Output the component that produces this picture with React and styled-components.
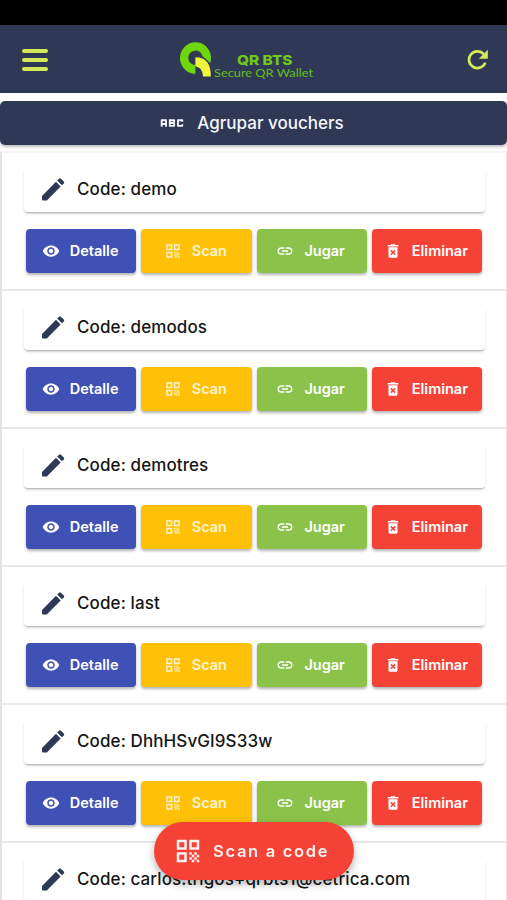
import React from "react";
import styled, { createGlobalStyle } from "styled-components";
import {
  MdAbc,
  MdDeleteForever,
  MdLink,
  MdQrCode,
  MdVisibility,
} from "react-icons/md";

/* style */

const GlobalStyle = createGlobalStyle`
  * {
    box-sizing: border-box;
  }
  body {
    margin: 0;
    background-color: #fff;
    font-family: Inter, "Liberation Sans", sans-serif;
  }
  button {
    margin: 0;
    padding: 0;
    border: 0;
    font-family: inherit;
    font-weight: 500;
  }
  svg {
    display: block;
    flex: none;
  }
`;

const Screen = styled.div`
  width: 100%;
  height: 900px;
  overflow: hidden;
`;

const StatusBar = styled.div`
  height: 25px;
  background-color: #000;
`;

const Header = styled.header`
  display: flex;
  align-items: center;
  justify-content: space-between;
  height: 68px;
  padding: 2px 18px 0 22px;
  background-color: #2f3956;
`;

const MenuButton = styled.button`
  display: flex;
  flex-direction: column;
  gap: 5px;
  width: 26px;
  background: none;

  & span {
    height: 4px;
    border-radius: 2px;
    background-color: #d5e855;
  }
`;

const LogoSvg = styled.svg`
  margin-right: 19px;
`;

const RefreshButton = styled.button`
  display: flex;
  background: none;
  color: #d5ec5a;
`;

const GroupButton = styled.button`
  display: flex;
  align-items: center;
  justify-content: center;
  gap: 10px;
  width: 100%;
  height: 44px;
  margin-top: 8px;
  padding-right: 6px;
  border-radius: 5px;
  background-color: #2f3956;
  box-shadow: 0 2px 3px rgba(0, 0, 0, 0.25);
  color: #f4f7ff;
  font-size: 17px;
`;

const List = styled.ul`
  margin: 6px 0 0;
  padding: 0;
  border: 1px solid #e4e4e4;
  border-top: 2px solid #f5f5f5;
  border-left-width: 2px;
  list-style: none;
`;

const Item = styled.li`
  height: 138px;
  padding: 15px 21px 0 22px;
  border-bottom: 2px solid #e8e8e8;
`;

const CodeCard = styled.div`
  display: flex;
  align-items: center;
  gap: 12px;
  height: 44px;
  padding: 0 0 1px 18px;
  border-radius: 4px;
  background-color: #fff;
  box-shadow: 0 2px 2px -1px rgba(0, 0, 0, 0.25), 0 2px 3px rgba(0, 0, 0, 0.1);
  color: #2f3956;

  & p {
    margin: 0;
    padding-bottom: 1px;
    color: #161616;
    font-size: 17px;
    font-weight: 500;
    letter-spacing: 0.1px;
    white-space: nowrap;
  }
`;

const Actions = styled.div`
  display: grid;
  grid-template-columns: repeat(4, 1fr);
  gap: 5px;
  margin: 17px 3px 0 2px;
`;

const ActionButton = styled.button`
  display: flex;
  align-items: center;
  justify-content: center;
  gap: 10px;
  height: 44px;
  padding-right: 2px;
  border-radius: 4px;
  background-color: ${(props) => props.$bgColor};
  box-shadow: 0 2px 3px rgba(0, 0, 0, 0.3);
  color: ${(props) => props.$color || "#fff"};
  font-size: 14.5px;
  font-weight: 600;

  & span {
    padding-bottom: 1px;
  }
`;

const ScanButton = styled.button`
  position: fixed;
  left: 154px;
  bottom: 20px;
  display: flex;
  align-items: center;
  gap: 10px;
  width: 200px;
  height: 58px;
  padding-left: 19px;
  border-radius: 29px;
  background-color: #f44336;
  box-shadow: 0 4px 8px rgba(0, 0, 0, 0.3);
  color: #fff1ef;
  font-size: 16.5px;
  font-weight: 600;
  letter-spacing: 1.7px;
  white-space: nowrap;
`;

const codes = [
  "demo",
  "demodos",
  "demotres",
  "last",
  "DhhHSvGI9S33w",
  "carlos.trigos+qrbts1@cetrica.com",
];

const actions = [
  { label: "Detalle", Icon: MdVisibility, bgColor: "#3f51b5" },
  { label: "Scan", Icon: MdQrCode, bgColor: "#ffc107", color: "#fff4cf" },
  { label: "Jugar", Icon: MdLink, bgColor: "#8bc34a" },
  { label: "Eliminar", Icon: MdDeleteForever, bgColor: "#f44336" },
];

const Logo = () => (
  <LogoSvg width="136" height="38" viewBox="0 0 136 38">
    {/* ring, left open where the tail comes out */}
    <path
      d="M15.4 32.8A15.5 15.8 0 1 1 30.2 22L25.5 17.8L22.6 15.6A7.2 7.2 0 1 0 15.4 24Z"
      fill="#6fd60b"
    />
    <path d="M15.4 16.2Q31 16 30.8 35.4H23Q23 26.5 15.4 25.2Z" fill="#f0f63c" />
    <text
      x="57"
      y="23.7"
      textLength="55.5"
      lengthAdjust="spacingAndGlyphs"
      fontFamily="Inter, sans-serif"
      fontSize="13.5"
      fontWeight="800"
      fill="#6fc915"
    >
      QR BTS
    </text>
    <text
      x="34"
      y="35.5"
      textLength="99"
      lengthAdjust="spacingAndGlyphs"
      fontFamily="Lato, sans-serif"
      fontSize="12"
      fill="#67bd20"
    >
      Secure QR Wallet
    </text>
  </LogoSvg>
);

const PencilIcon = () => (
  <svg width="23" height="23" viewBox="0 0 23 23" fill="currentColor">
    <path d="M0 18L14 3.8L18.7 8.5L4.8 22.5H0.8Q0 22.5 0 21.7Z" />
    <path d="M15.2 2.6L17.1 0.7Q18 -0.1 18.9 0.7L21.8 3.6Q22.6 4.5 21.8 5.4L19.9 7.3Z" />
  </svg>
);

const RefreshIcon = () => (
  <svg width="22" height="22" viewBox="0 0 22 22">
    <path
      d="M18.3 13.6A8.4 8.4 0 1 1 16.6 5"
      fill="none"
      stroke="currentColor"
      strokeWidth="2.7"
    />
    <path d="M20.8 0.8V9.8H11.8Z" fill="currentColor" />
  </svg>
);

const Voucher = ({ code }) => (
  <Item>
    <CodeCard>
      <PencilIcon />
      <p>Code: {code}</p>
    </CodeCard>
    <Actions>
      {actions.map(({ label, Icon, bgColor, color }) => (
        <ActionButton key={label} $bgColor={bgColor} $color={color}>
          <Icon size={18} />
          <span>{label}</span>
        </ActionButton>
      ))}
    </Actions>
  </Item>
);

const App = () => {
  return (
    <Screen>
      <GlobalStyle />
      <StatusBar />
      <Header>
        <MenuButton>
          <span />
          <span />
          <span />
        </MenuButton>
        <Logo />
        <RefreshButton>
          <RefreshIcon />
        </RefreshButton>
      </Header>
      <GroupButton>
        <MdAbc size={30} />
        Agrupar vouchers
      </GroupButton>
      <List>
        {codes.map((code) => (
          <Voucher key={code} code={code} />
        ))}
      </List>
      <ScanButton>
        <MdQrCode size={30} />
        Scan a code
      </ScanButton>
    </Screen>
  );
};
export default App;
